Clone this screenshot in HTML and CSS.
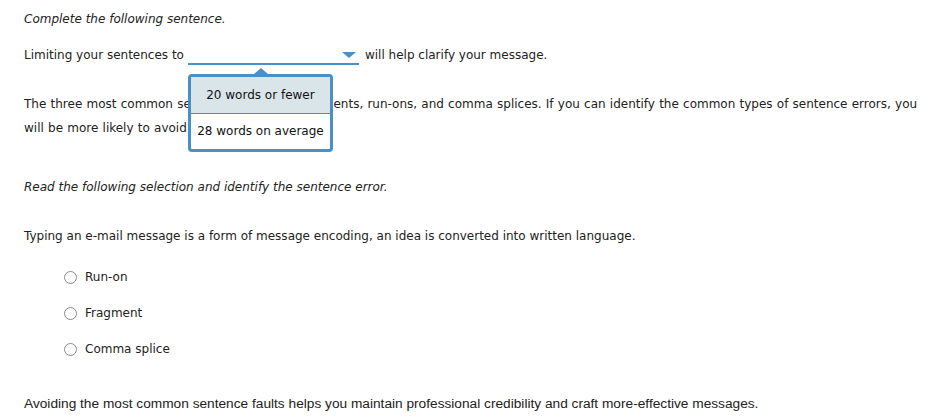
FILE: index.html
```html
<!DOCTYPE html>
<html>
<head>
<meta charset="utf-8">
<link rel="stylesheet" href="styles.css">
</head>
<body>
<div class="page">
  <p class="instr first">Complete the following sentence.</p>
  <div class="fill">
    <span>Limiting your sentences to</span>
    <span class="dd">
      <span class="arrow"></span>
      <div class="menu">
        <div class="opt sel">20 words or fewer</div>
        <div class="opt">28 words on average</div>
      </div>
    </span>
    <span>will help clarify your message.</span>
  </div>
  <p class="para">The three most common sentence faults are fragments, run-ons, and comma splices. If you can identify the common types of sentence errors, you will be more likely to avoid them in your writing.</p>
  <p class="instr read">Read the following selection and identify the sentence error.</p>
  <p class="sel-text">Typing an e-mail message is a form of message encoding, an idea is converted into written language.</p>
  <div class="choices">
    <label class="choice"><span class="radio"></span>Run-on</label>
    <label class="choice"><span class="radio"></span>Fragment</label>
    <label class="choice"><span class="radio"></span>Comma splice</label>
  </div>
  <p class="final">Avoiding the most common sentence faults helps you maintain professional credibility and craft more-effective messages.</p>
</div>
</body>
</html>
```
FILE: styles.css
```css
html, body { margin: 0; padding: 0; background: #fff; }
body { font-family: "DejaVu Sans", Verdana, sans-serif; font-size: 12px; color: #222; }
.page { padding: 0 10px 0 24px; }
p { margin: 0; }
.instr { font-style: italic; }
.first { padding-top: 11px; line-height: 16px; }
.fill { margin-top: 14px; display: flex; align-items: flex-end; height: 24px; line-height: 16px; }
.fill > span:first-child { padding-bottom: 2px; }
.fill > span:last-child { padding-bottom: 2px; margin-left: 6px; }
.dd { position: relative; width: 171px; height: 22px; border-bottom: 2px solid #4a90c8; margin-left: 4px; }
.arrow { position: absolute; right: 3px; top: 11px; width: 0; height: 0; border-left: 7px solid transparent; border-right: 7px solid transparent; border-top: 6px solid #4a90c8; }
.menu { position: absolute; left: 0; top: 33px; width: 139px; border: 3px solid #4a90c8; border-radius: 4px; background: #fff; z-index: 2; }
.menu::before { content: ""; position: absolute; left: 63px; top: -9px; border-left: 7px solid transparent; border-right: 7px solid transparent; border-bottom: 6px solid #4a90c8; }
.opt { height: 35px; line-height: 35px; text-align: center; color: #111; }
.opt.sel { background: #dae5e9; border-bottom: 1px solid #4a90c8; height: 36px; line-height: 36px; }
.para { margin-top: 27px; line-height: 24px; word-spacing: 0.4px; }
.read { margin-top: 39px; line-height: 16px; }
.sel-text { margin-top: 33px; line-height: 16px; }
.choices { margin-top: 25px; padding-left: 40px; display: flex; flex-direction: column; gap: 20px; }
.choice { display: flex; align-items: center; height: 16px; line-height: 16px; }
.radio { width: 11px; height: 11px; border: 1px solid #8a8a8a; border-radius: 50%; margin-right: 8px; box-sizing: content-box; }
.final { margin-top: 39px; font-family: "Liberation Sans", Arial, sans-serif; font-size: 13.7px; line-height: 16px; }
```
